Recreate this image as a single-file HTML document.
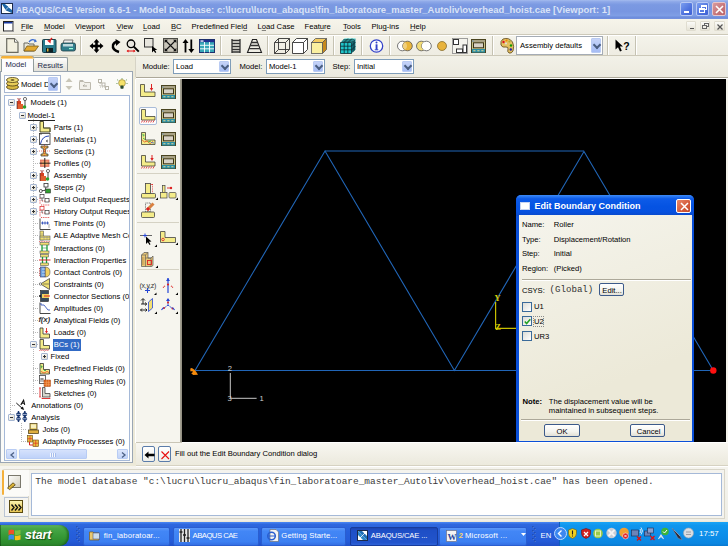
<!DOCTYPE html>
<html><head><meta charset="utf-8">
<style>
*{margin:0;padding:0;box-sizing:border-box}
html,body{width:728px;height:546px;overflow:hidden;background:#ECE9D8;font-family:"Liberation Sans",sans-serif;font-size:7.65px;color:#000}
.a{position:absolute}
.t{position:absolute;white-space:pre;line-height:10px;height:10px}
svg{position:absolute;overflow:visible}
u{text-decoration:underline;text-decoration-color:rgba(0,0,0,.45);text-underline-offset:0.5px}
.sep{position:absolute;width:2px;border-left:1px solid #C5C2B2;border-right:1px solid #fff}
.combo{position:absolute;background:#fff;border:1px solid #7F9DB9}
.dd{position:absolute;right:1px;top:1px;bottom:1px;width:10px;background:linear-gradient(#C6D3F7,#B4C8F6 50%,#A6BCF4);border:1px solid #B9CBF3;border-radius:1px}
.dd:after{content:"";position:absolute;left:50%;top:50%;width:4px;height:4px;margin-left:-2.3px;margin-top:-3.3px;border-right:2px solid #4A5E80;border-bottom:2px solid #4A5E80;transform:rotate(45deg)}
</style></head><body>
<!-- TITLE BAR -->
<div class="a" style="left:0;top:0;width:728px;height:19px;background:linear-gradient(#A4BBEE,#8DA8E8 9%,#7B99E2 25%,#7896E1 60%,#7F9EE5 82%,#7090DE 90%,#6A88DA 97%,#B8C8F0)"></div>
<svg style="left:1.3px;top:3px" width="12" height="11" viewBox="0 0 12 11"><rect x="0.5" y="0.5" width="11" height="10" fill="#fff" stroke="#1B2A4A"/><path d="M1 1 L6.5 3 L11 10 L5 7.5 Z" fill="#1B5E9E"/><path d="M1 1 L4 1 L7 4 L11 7 L11 10 L8 8 L4 5 Z" fill="#1E66A8"/><path d="M2.5 9 L9.5 2" stroke="#CFE0F0" stroke-width=".8"/></svg>
<div class="t" style="left:16.2px;top:4.5px;font-weight:bold;font-size:9.3px;color:#D9E3F7;line-height:11px;transform-origin:0 0;transform:scaleX(0.9050)">ABAQUS/CAE Version</div><div class="t" style="left:109.4px;top:4.5px;font-weight:bold;font-size:9.3px;color:#D9E3F7;line-height:11px;transform-origin:0 0;transform:scaleX(1.0171)">6.6-1 - Model Database:</div><div class="t" style="left:216.5px;top:4.5px;font-weight:bold;font-size:9.3px;color:#D9E3F7;line-height:11px;transform-origin:0 0;transform:scaleX(1.0165)">c:\lucru\lucru_abaqus\fin_laboratoare_master_Autoliv\overhead_hoist.cae [Viewport: 1]</div>
<div class="a" style="left:680px;top:2px;width:13px;height:14px;border-radius:2px;background:linear-gradient(135deg,#7A9DEF,#4E72DE 60%,#3E61D4);border:1px solid #B7C8F4"><div class="a" style="left:3px;top:8px;width:5px;height:2px;background:#fff"></div></div>
<div class="a" style="left:696px;top:2px;width:13px;height:14px;border-radius:2px;background:linear-gradient(135deg,#7A9DEF,#4E72DE 60%,#3E61D4);border:1px solid #B7C8F4"><div class="a" style="left:4px;top:2px;width:6px;height:5px;border:1px solid #fff;border-top-width:2px"></div><div class="a" style="left:2px;top:5px;width:6px;height:5px;border:1px solid #fff;border-top-width:2px;background:#5A7CE2"></div></div>
<div class="a" style="left:712px;top:2px;width:14px;height:14px;border-radius:2px;background:linear-gradient(135deg,#D89A9E,#C67479 60%,#B9646B);border:1px solid #E7C5C9"><svg style="left:2px;top:2px" width="9" height="9"><path d="M1 1 L8 8 M8 1 L1 8" stroke="#fff" stroke-width="1.6"/></svg></div>

<!-- MENU BAR -->
<div class="a" style="left:0;top:19px;width:728px;height:16px;background:linear-gradient(#F6F4EA,#EFEDE3);border-bottom:1px solid #CDC9B9"></div>
<svg style="left:3.3px;top:21px" width="11" height="11" viewBox="0 0 11 11"><rect x="0.5" y="0.5" width="9.5" height="9.5" fill="#fff" stroke="#222"/><rect x="1" y="1" width="8.5" height="1.5" fill="#1C3CA4"/><path d="M10.5 1.5 V10.5 H1.5" stroke="#999" fill="none"/></svg>
<div class="t" style="left:21px;top:22px"><u>F</u>ile</div>
<div class="t" style="left:44px;top:22px"><u>M</u>odel</div>
<div class="t" style="left:75px;top:22px">Vie<u>w</u>port</div>
<div class="t" style="left:116.5px;top:22px"><u>V</u>iew</div>
<div class="t" style="left:143px;top:22px"><u>L</u>oad</div>
<div class="t" style="left:171px;top:22px"><u>B</u>C</div>
<div class="t" style="left:191.5px;top:22px">Predefined Fiel<u>d</u></div>
<div class="t" style="left:257.5px;top:22px">L<u>o</u>ad Case</div>
<div class="t" style="left:304.5px;top:22px">Feat<u>u</u>re</div>
<div class="t" style="left:343px;top:22px"><u>T</u>ools</div>
<div class="t" style="left:371.5px;top:22px">Plu<u>g</u>-ins</div>
<div class="t" style="left:410px;top:22px"><u>H</u>elp</div>
<div class="a" style="left:686px;top:21px;width:10px;height:10px;border-radius:1px;background:linear-gradient(#FBFBF8,#E6E3D6);border:1px solid #E0DDD0"><div class="a" style="left:2.5px;top:6px;width:4px;height:1.2px;background:#555"></div></div>
<div class="a" style="left:700px;top:21px;width:10px;height:10px;border-radius:1px;background:linear-gradient(#FBFBF8,#E6E3D6);border:1px solid #E0DDD0"><div class="a" style="left:3px;top:1px;width:5px;height:4px;border:1px solid #666;border-top-width:1.5px"></div><div class="a" style="left:1px;top:3px;width:5px;height:4px;border:1px solid #666;border-top-width:1.5px;background:#F2F0E8"></div></div>
<div class="a" style="left:714px;top:21px;width:11px;height:10px;border-radius:1px;background:linear-gradient(#FBFBF8,#E6E3D6);border:1px solid #E0DDD0"><svg style="left:2px;top:1.5px" width="6" height="6"><path d="M0.5 0.5 L5.5 5.5 M5.5 0.5 L0.5 5.5" stroke="#555" stroke-width="1.2"/></svg></div>
<!-- TOOLBAR -->
<div class="a" style="left:0;top:35px;width:728px;height:21px;background:linear-gradient(#F4F3EA,#EEECE2);border-top:1px solid #FFFFFF;border-bottom:1px solid #CCC8B8"></div>
<div class="sep" style="left:80px;top:36px;height:19px"></div>
<div class="sep" style="left:220px;top:36px;height:19px"></div>
<div class="sep" style="left:267px;top:36px;height:19px"></div>
<div class="sep" style="left:333px;top:36px;height:19px"></div>
<div class="sep" style="left:361px;top:36px;height:19px"></div>
<div class="sep" style="left:389px;top:36px;height:19px"></div>
<div class="sep" style="left:492px;top:36px;height:19px"></div>
<div class="sep" style="left:607px;top:36px;height:19px"></div>
<div class="sep" style="left:635px;top:36px;height:19px"></div>
<!-- new -->
<svg style="left:6px;top:38px" width="13" height="15" viewBox="0 0 13 15"><path d="M0.7 0.7 H8.5 L12 4.2 V14.3 H0.7 Z" fill="#F3F0DF" stroke="#6B6A60" stroke-width="1.2"/><path d="M8.5 0.7 V4.2 H12" fill="#fff" stroke="#6B6A60"/></svg>
<!-- open -->
<svg style="left:23px;top:38px" width="16" height="15" viewBox="0 0 16 15"><path d="M1 5 H5 L6 6 H11 V13 H1 Z" fill="#E8E6DA" stroke="#6B6A60"/><path d="M1 13 L4 8 H15.5 L12 13 Z" fill="#E3A92F" stroke="#7A5A18" stroke-width=".8"/><path d="M6 4 Q9 0 12.5 3" stroke="#3F6FD0" stroke-width="1.3" fill="none"/><path d="M11 4.5 L14 3.5 L12 1" fill="#3F6FD0"/></svg>
<!-- save -->
<svg style="left:42px;top:38px" width="15" height="15" viewBox="0 0 15 15"><rect x="0.5" y="1.5" width="13.5" height="13" rx="1" fill="#2A7B8C" stroke="#1B3F4A"/><rect x="3" y="2" width="8.5" height="5" fill="#fff"/><rect x="4" y="10" width="7" height="4.5" fill="#0E1E22"/><rect x="5" y="10.5" width="1.5" height="3" fill="#D7B23C"/><path d="M10 0 L7 3.5" stroke="#D22" stroke-width="1.4"/><path d="M5 2.5 L8.5 5.5 L8.8 1.8 Z" fill="#D22"/></svg>
<!-- print -->
<svg style="left:60px;top:39px" width="16" height="14" viewBox="0 0 16 14"><path d="M4 1 H13 L12 5 H3 Z" fill="#EDEDED" stroke="#555" stroke-width=".8"/><path d="M1 6 Q1 4 3 4 H14 Q15.5 4 15.5 6 V10 Q15.5 12 13.5 12 H3 Q1 12 1 10 Z" fill="#2F7D8C" stroke="#1F3F48" stroke-width=".8"/><rect x="3" y="5" width="10" height="2.5" fill="#BFD8DD"/><rect x="9" y="9" width="4" height="1.2" fill="#9FD"/></svg>
<!-- move -->
<svg style="left:89px;top:39px" width="15" height="14" viewBox="0 0 15 14"><path d="M7.5 0 L10.5 3.5 H8.8 V5.7 H11 V4 L14.5 7 L11 10 V8.3 H8.8 V10.5 H10.5 L7.5 14 L4.5 10.5 H6.2 V8.3 H4 V10 L0.5 7 L4 4 V5.7 H6.2 V3.5 H4.5 Z" fill="#000"/></svg>
<!-- rotate -->
<svg style="left:110px;top:39px" width="11" height="14" viewBox="0 0 11 14"><path d="M9 13 Q2 11 3 6 Q4 3 7 3" stroke="#000" stroke-width="2.4" fill="none"/><path d="M5.5 0 L10.5 3 L6 7 Z" fill="#000"/></svg>
<!-- zoom -->
<svg style="left:126px;top:39px" width="14" height="14" viewBox="0 0 14 14"><circle cx="5" cy="4.8" r="3.8" fill="#E9E7E0" stroke="#000" stroke-width="1.3"/><path d="M7.8 7.6 L12.8 12.6" stroke="#000" stroke-width="2"/><path d="M1.5 12 H8.5" stroke="#E01010" stroke-width="1"/><path d="M0.5 12 L2.5 10.5 V13.5 Z M9.5 12 L7.5 10.5 V13.5 Z" fill="#E01010"/></svg>
<!-- box zoom -->
<svg style="left:144px;top:38px" width="15" height="15" viewBox="0 0 15 15"><rect x="0.5" y="0.5" width="8.5" height="8.5" fill="#E7E5DD" stroke="#333"/><path d="M8 8 L8 14.5 L9.7 12.7 L11.2 15 L12.3 14.3 L10.9 12 L13.3 12 Z" fill="#000"/></svg>
<!-- autofit -->
<svg style="left:162.5px;top:38px" width="15" height="15" viewBox="0 0 15 15"><rect x="0.5" y="0.5" width="14" height="14" fill="#9C998E" stroke="#4A4A44"/><rect x="1.5" y="1.5" width="12" height="12" fill="#C9C6BA"/><path d="M7.5 7.5 L2.5 2.5 M7.5 7.5 L12.5 2.5 M7.5 7.5 L2.5 12.5 M7.5 7.5 L12.5 12.5" stroke="#111" stroke-width="1.1"/><path d="M1.7 1.7 H5 L1.7 5 Z M13.3 1.7 H10 L13.3 5 Z M1.7 13.3 H5 L1.7 10 Z M13.3 13.3 H10 L13.3 10 Z" fill="#111"/></svg>
<!-- arrows updown -->
<svg style="left:182px;top:39px" width="13" height="14" viewBox="0 0 13 14"><path d="M3.5 13.5 V2.5" stroke="#000" stroke-width="1.8"/><path d="M0.5 4 L3.5 0 L6.5 4 Z" fill="#000"/><path d="M9.3 0.5 V11.5" stroke="#000" stroke-width="1.8"/><path d="M6.3 10 L9.3 14 L12.3 10 Z" fill="#000"/></svg>
<!-- table -->
<svg style="left:199px;top:39px" width="16" height="14" viewBox="0 0 16 14"><rect x="0.5" y="0.5" width="15" height="13" fill="#38A8B8" stroke="#1D2F6D"/><rect x="1" y="1" width="14" height="2.2" fill="#1F2F8F"/><rect x="1.5" y="1.4" width="3" height="1.3" fill="#fff"/><path d="M1 6.3 H15 M1 9.8 H15 M5.5 3 V13.5 M10.5 3 V13.5" stroke="#fff" stroke-width=".9"/></svg>
<!-- ladder -->
<svg style="left:230.5px;top:39px" width="10" height="14" viewBox="0 0 10 14"><path d="M1 0 V14 M9 0 V14" stroke="#222" stroke-width="1.2"/><path d="M1 1.5 H9 M1 4.5 H9 M1 7.5 H9 M1 10.5 H9 M1 13 H9" stroke="#333" stroke-width="1.3"/></svg>
<!-- pyramid -->
<svg style="left:246.5px;top:39px" width="15" height="14" viewBox="0 0 15 14"><path d="M5.5 0.5 H9.5 L14.5 13.5 H0.5 Z" fill="none" stroke="#222" stroke-width="1.1"/><path d="M4.5 3.5 H10.5 M3.3 6.5 H11.7 M2.1 9.7 H12.9" stroke="#333" stroke-width="1.3"/></svg>
<!-- wire cube -->
<svg style="left:274px;top:38px" width="16" height="16" viewBox="0 0 16 16"><path d="M0.5 4.5 H11.5 V15.5 H0.5 Z M4.5 0.5 H15.5 V11.5 H4.5 Z M0.5 4.5 L4.5 0.5 M11.5 4.5 L15.5 0.5 M11.5 15.5 L15.5 11.5 M0.5 15.5 L4.5 11.5" fill="none" stroke="#333" stroke-width=".9"/></svg>
<!-- hidden cube -->
<svg style="left:292px;top:38px" width="16" height="16" viewBox="0 0 16 16"><path d="M0.5 4.5 L4.5 0.5 H15.5 V11.5 L11.5 15.5 H0.5 Z" fill="#fff" stroke="#333" stroke-width=".9"/><path d="M0.5 4.5 H11.5 V15.5 M11.5 4.5 L15.5 0.5" fill="none" stroke="#333" stroke-width=".9"/></svg>
<!-- shaded cube -->
<svg style="left:311px;top:38px" width="16" height="16" viewBox="0 0 16 16"><path d="M0.5 4.5 L4.5 0.5 H15.5 L11.5 4.5 Z" fill="#F4CC61" stroke="#555" stroke-width=".8"/><path d="M11.5 4.5 L15.5 0.5 V11.5 L11.5 15.5 Z" fill="#C78A1C" stroke="#555" stroke-width=".8"/><rect x="0.5" y="4.5" width="11" height="11" fill="#FAF0A0" stroke="#555" stroke-width=".8"/></svg>
<!-- mesh cube -->
<svg style="left:340px;top:38px" width="16" height="16" viewBox="0 0 16 16"><path d="M0.5 4.5 L4.5 0.5 H15.5 L11.5 4.5 Z" fill="#3FD7D7"/><path d="M11.5 4.5 L15.5 0.5 V11.5 L11.5 15.5 Z" fill="#1A8F9A"/><rect x="0.5" y="4.5" width="11" height="11" fill="#20C4C8"/><path d="M0.5 4.5 H11.5 V15.5 H0.5 Z M4.2 4.5 V15.5 M7.8 4.5 V15.5 M0.5 8.2 H11.5 M0.5 11.8 H11.5 M1.8 3.2 H12.8 M3.2 1.8 H14.2 M13 3 V14 M14.2 1.8 V12.8 M8 0.5 L4 4.5 M12 0.5 L8 4.5 M11.5 8 L15.5 4 M11.5 12 L15.5 8" fill="none" stroke="#0A2A30" stroke-width=".8"/></svg>
<!-- info -->
<svg style="left:369px;top:39px" width="15" height="14" viewBox="0 0 15 14"><circle cx="7.5" cy="7" r="6.2" fill="#fff" stroke="#3342C8" stroke-width="1.3"/><rect x="6.6" y="5.3" width="1.9" height="5.5" fill="#3342C8"/><circle cx="7.5" cy="3.4" r="1" fill="#3342C8"/><path d="M5.7 10.8 H9.3" stroke="#3342C8"/></svg>
<!-- circles -->
<svg style="left:396.5px;top:40px" width="16" height="12" viewBox="0 0 16 12"><circle cx="5.3" cy="6" r="4.8" fill="#fff" stroke="#555" stroke-width=".8"/><circle cx="10.5" cy="6" r="4.8" fill="#E9B53B" stroke="#555" stroke-width=".8"/><path d="M7.9 2 A4.8 4.8 0 0 1 7.9 10 A4.8 4.8 0 0 1 7.9 2" fill="#F1CF7C"/></svg>
<svg style="left:415.5px;top:40px" width="16" height="12" viewBox="0 0 16 12"><circle cx="5.3" cy="6" r="4.8" fill="#F2DB77" stroke="#555" stroke-width=".8"/><circle cx="10.5" cy="6" r="4.8" fill="#fff" stroke="#555" stroke-width=".8" fill-opacity=".95"/><path d="M7.9 2 A4.8 4.8 0 0 1 7.9 10 A4.8 4.8 0 0 1 7.9 2" fill="#fff"/></svg>
<svg style="left:437px;top:41px" width="10" height="10" viewBox="0 0 10 10"><circle cx="5" cy="5" r="4.5" fill="#E8B33C" stroke="#7A6020" stroke-width=".7"/></svg>
<!-- layout -->
<svg style="left:452px;top:38px" width="16" height="16" viewBox="0 0 16 16"><rect x="0.5" y="0.5" width="15" height="15" fill="#F4F3EC" stroke="#888" stroke-width=".8"/><rect x="1.5" y="1.5" width="5" height="5" fill="#fff" stroke="#333"/><rect x="4.5" y="11" width="6" height="3.5" fill="#fff" stroke="#333"/><rect x="11" y="7" width="3.5" height="7.5" fill="#fff" stroke="#333"/></svg>
<!-- monitor -->
<svg style="left:471px;top:38.5px" width="15" height="14" viewBox="0 0 15 14"><rect x="0.5" y="0.5" width="14" height="13" fill="#C9C38A" stroke="#4A4420"/><rect x="1" y="1" width="13" height="2" fill="#A9A285"/><circle cx="2" cy="2" r=".6" fill="#3A8AD0"/><rect x="2.5" y="3.8" width="10" height="5" fill="#D8D2C6" stroke="#3A3418" stroke-width="1"/><rect x="1" y="10" width="13" height="3.5" fill="#2A8FA6"/><path d="M2.3 11.7 H4.5 M6.3 11.7 H8.5 M10.3 11.7 H12.5" stroke="#E8D890" stroke-width="1.1"/></svg>
<!-- palette -->
<svg style="left:500px;top:38px" width="14" height="16" viewBox="0 0 14 16"><path d="M3 1 Q9 -1 12.5 4 Q14.5 8 13 13 Q11.5 15.8 9 15 Q7 14 8 11 Q8.5 9 6 9 Q2 10 1 7 Q0 3 3 1 Z" fill="#E3C060" stroke="#5A4418" stroke-width=".8"/><circle cx="3.5" cy="4" r="1.2" fill="#D12"/><circle cx="6.5" cy="2.5" r="1.1" fill="#E80"/><circle cx="9.5" cy="3.5" r="1.1" fill="#AA3"/><circle cx="11" cy="7.5" r="1.2" fill="#190"/><circle cx="10.8" cy="11.5" r="1.2" fill="#22A"/><circle cx="6" cy="5.5" r="1" fill="#ddd"/></svg>
<div class="combo" style="left:516px;top:36px;width:87px;height:19px;border-color:#A5ACB5"><div class="t" style="left:3px;top:4px">Assembly defaults</div><div class="dd" style="width:10px"></div></div>
<!-- pointer help -->
<svg style="left:615px;top:39px" width="15" height="14" viewBox="0 0 15 14"><path d="M0.5 0.5 V10.5 L3 8.2 L5 12.5 L6.8 11.7 L4.9 7.6 L8 7.4 Z" fill="#000"/><text x="8.2" y="10.5" font-family="Liberation Sans" font-weight="bold" font-size="10.5">?</text></svg>
<!-- MODULE BAR -->
<div class="a" style="left:136px;top:56px;width:592px;height:21px;background:linear-gradient(#F2F1E8,#ECEADF)"></div>
<div class="a" style="left:136px;top:77px;width:592px;height:1px;background:#ACA899"></div>
<div class="a" style="left:136px;top:78px;width:592px;height:1px;background:#fff"></div>
<div class="a" style="left:135px;top:57px;width:1px;height:20px;background:#D6D3C6"></div>
<div class="t" style="left:142.5px;top:61.5px">Module:</div>
<div class="combo" style="left:173px;top:59px;width:58px;height:15px"><div class="t" style="left:2px;top:2px">Load</div><div class="dd"></div></div>
<div class="t" style="left:239.5px;top:61.5px">Model:</div>
<div class="combo" style="left:266px;top:59px;width:59px;height:15px"><div class="t" style="left:2px;top:2px">Model-1</div><div class="dd"></div></div>
<div class="t" style="left:332.5px;top:61.5px">Step:</div>
<div class="combo" style="left:354px;top:59px;width:60px;height:15px"><div class="t" style="left:2px;top:2px">Initial</div><div class="dd"></div></div>

<!-- LEFT PANEL -->
<div class="a" style="left:0;top:71px;width:133px;height:392px;background:#FBFBF8;border:1px solid #9AA6B4"></div>
<div class="a" style="left:33px;top:57px;width:35px;height:14px;background:linear-gradient(#FEFEFE,#ECEBE6 60%,#E3E1D9);border:1px solid #919B9C;border-bottom:none;border-radius:2px 2px 0 0"></div>
<div class="t" style="left:37.5px;top:60.5px;color:#1E2A4A">Results</div>
<div class="a" style="left:0.5px;top:56px;width:33px;height:16px;background:#FCFCFE;border:1px solid #919B9C;border-bottom:none;border-radius:2px 2px 0 0"></div>
<div class="a" style="left:1px;top:56px;width:32px;height:2px;background:#F4B03A;border-radius:2px 2px 0 0"></div>
<div class="a" style="left:0.5px;top:57.5px;width:33px;height:1px;background:#FDD68A"></div>
<div class="t" style="left:5.5px;top:60px;color:#1E2A4A">Model</div>
<!-- model db combo -->
<div class="combo" style="left:4px;top:75px;width:57px;height:18px;border-color:#A9B8D2;background:#fff"><div class="t" style="left:16px;top:4px">Model D</div><div class="dd" style="width:10px;right:2px"></div></div>
<svg style="left:6px;top:77px" width="13" height="13" viewBox="0 0 13 13"><ellipse cx="6.5" cy="10" rx="6" ry="2.5" fill="#D8B840" stroke="#4A3A10" stroke-width=".8"/><ellipse cx="6.5" cy="6.5" rx="6" ry="2.5" fill="#E8CC58" stroke="#4A3A10" stroke-width=".8"/><ellipse cx="6.5" cy="3" rx="6" ry="2.5" fill="#F0DC70" stroke="#4A3A10" stroke-width=".8"/><ellipse cx="6.5" cy="3" rx="2" ry=".8" fill="#4A3A10"/></svg>
<svg style="left:65px;top:77px" width="8" height="14" viewBox="0 0 8 14"><path d="M0.5 5 L4 1 L7.5 5 Z M0.5 9 L4 13 L7.5 9 Z" fill="#C9C6B8"/></svg>
<svg style="left:79px;top:79px" width="12" height="11" viewBox="0 0 12 11"><path d="M0.5 2.5 H4.5 L5.5 3.5 H11.5 V10.5 H0.5 Z" fill="#F2F1EA" stroke="#BDBAAE"/><path d="M0.5 1.5 H4 L5 2.5" fill="none" stroke="#BDBAAE"/><path d="M4 7 H8 M4 7 L5.5 5.5" stroke="#A9A69A"/></svg>
<svg style="left:98px;top:79px" width="11" height="11" viewBox="0 0 11 11"><rect x="0.5" y="0.5" width="3" height="3" fill="#fff" stroke="#B9B6AA"/><rect x="7.5" y="7.5" width="3" height="3" fill="#fff" stroke="#B9B6AA"/><rect x="4" y="4" width="3" height="3" fill="#fff" stroke="#B9B6AA"/><path d="M2 3.5 L4 5 M6.5 6.5 L8.5 8 M2 4 V8 H7" stroke="#B9B6AA" fill="none" stroke-dasharray="1 1"/></svg>
<svg style="left:116px;top:77.5px" width="12" height="12" viewBox="0 0 12 12"><path d="M6 0 V1.3 M1 1.5 L2.3 2.6 M11 1.5 L9.7 2.6 M0.3 5.5 H1.6 M11.7 5.5 H10.4" stroke="#6A9A5A" stroke-width=".8"/><circle cx="6" cy="5" r="3.4" fill="#F6E36A" stroke="#8A7A30" stroke-width=".6"/><rect x="4.4" y="7.6" width="3.2" height="3.2" rx=".8" fill="#2A4A30"/></svg>
<!-- tree box -->
<div class="a" style="left:4px;top:95px;width:126px;height:366px;background:#fff;border:1px solid #A5B9D8"></div>
<div class="a" style="left:0;top:0;width:128.5px;height:448px;overflow:hidden">
<!-- TREE -->
<div class="a" style="left:10px;top:106.9px;width:1px;height:307.3px;background:repeating-linear-gradient(#B8B8B8 0 1px,transparent 1px 2px)"></div>
<div class="a" style="left:21px;top:119.0px;width:1px;height:-4.0px;background:repeating-linear-gradient(#B8B8B8 0 1px,transparent 1px 2px)"></div>
<div class="a" style="left:33px;top:119.1px;width:1px;height:274.5px;background:repeating-linear-gradient(#B8B8B8 0 1px,transparent 1px 2px)"></div>
<div class="a" style="left:33px;top:127.0px;width:5.0px;height:1px;background:repeating-linear-gradient(90deg,#B8B8B8 0 1px,transparent 1px 2px)"></div>
<div class="a" style="left:33px;top:139.0px;width:5.0px;height:1px;background:repeating-linear-gradient(90deg,#B8B8B8 0 1px,transparent 1px 2px)"></div>
<div class="a" style="left:33px;top:151.0px;width:5.0px;height:1px;background:repeating-linear-gradient(90deg,#B8B8B8 0 1px,transparent 1px 2px)"></div>
<div class="a" style="left:33px;top:163.0px;width:5.0px;height:1px;background:repeating-linear-gradient(90deg,#B8B8B8 0 1px,transparent 1px 2px)"></div>
<div class="a" style="left:33px;top:175.0px;width:5.0px;height:1px;background:repeating-linear-gradient(90deg,#B8B8B8 0 1px,transparent 1px 2px)"></div>
<div class="a" style="left:33px;top:187.0px;width:5.0px;height:1px;background:repeating-linear-gradient(90deg,#B8B8B8 0 1px,transparent 1px 2px)"></div>
<div class="a" style="left:33px;top:199.0px;width:5.0px;height:1px;background:repeating-linear-gradient(90deg,#B8B8B8 0 1px,transparent 1px 2px)"></div>
<div class="a" style="left:33px;top:211.0px;width:5.0px;height:1px;background:repeating-linear-gradient(90deg,#B8B8B8 0 1px,transparent 1px 2px)"></div>
<div class="a" style="left:33px;top:223.0px;width:5.0px;height:1px;background:repeating-linear-gradient(90deg,#B8B8B8 0 1px,transparent 1px 2px)"></div>
<div class="a" style="left:33px;top:235.0px;width:5.0px;height:1px;background:repeating-linear-gradient(90deg,#B8B8B8 0 1px,transparent 1px 2px)"></div>
<div class="a" style="left:33px;top:247.0px;width:5.0px;height:1px;background:repeating-linear-gradient(90deg,#B8B8B8 0 1px,transparent 1px 2px)"></div>
<div class="a" style="left:33px;top:260.0px;width:5.0px;height:1px;background:repeating-linear-gradient(90deg,#B8B8B8 0 1px,transparent 1px 2px)"></div>
<div class="a" style="left:33px;top:272.0px;width:5.0px;height:1px;background:repeating-linear-gradient(90deg,#B8B8B8 0 1px,transparent 1px 2px)"></div>
<div class="a" style="left:33px;top:284.0px;width:5.0px;height:1px;background:repeating-linear-gradient(90deg,#B8B8B8 0 1px,transparent 1px 2px)"></div>
<div class="a" style="left:33px;top:296.0px;width:5.0px;height:1px;background:repeating-linear-gradient(90deg,#B8B8B8 0 1px,transparent 1px 2px)"></div>
<div class="a" style="left:33px;top:308.0px;width:5.0px;height:1px;background:repeating-linear-gradient(90deg,#B8B8B8 0 1px,transparent 1px 2px)"></div>
<div class="a" style="left:33px;top:320.0px;width:5.0px;height:1px;background:repeating-linear-gradient(90deg,#B8B8B8 0 1px,transparent 1px 2px)"></div>
<div class="a" style="left:33px;top:332.0px;width:5.0px;height:1px;background:repeating-linear-gradient(90deg,#B8B8B8 0 1px,transparent 1px 2px)"></div>
<div class="a" style="left:33px;top:344.0px;width:5.0px;height:1px;background:repeating-linear-gradient(90deg,#B8B8B8 0 1px,transparent 1px 2px)"></div>
<div class="a" style="left:33px;top:368.0px;width:5.0px;height:1px;background:repeating-linear-gradient(90deg,#B8B8B8 0 1px,transparent 1px 2px)"></div>
<div class="a" style="left:33px;top:380.0px;width:5.0px;height:1px;background:repeating-linear-gradient(90deg,#B8B8B8 0 1px,transparent 1px 2px)"></div>
<div class="a" style="left:33px;top:393.0px;width:5.0px;height:1px;background:repeating-linear-gradient(90deg,#B8B8B8 0 1px,transparent 1px 2px)"></div>
<div class="a" style="left:10px;top:405.0px;width:6.0px;height:1px;background:repeating-linear-gradient(90deg,#B8B8B8 0 1px,transparent 1px 2px)"></div>
<div class="a" style="left:44px;top:350.7px;width:1px;height:3.1px;background:repeating-linear-gradient(#B8B8B8 0 1px,transparent 1px 2px)"></div>
<div class="a" style="left:21px;top:423.2px;width:1px;height:18.7px;background:repeating-linear-gradient(#B8B8B8 0 1px,transparent 1px 2px)"></div>
<div class="a" style="left:21px;top:429.0px;width:6.0px;height:1px;background:repeating-linear-gradient(90deg,#B8B8B8 0 1px,transparent 1px 2px)"></div>
<div class="a" style="left:21px;top:441.0px;width:6.0px;height:1px;background:repeating-linear-gradient(90deg,#B8B8B8 0 1px,transparent 1px 2px)"></div>
<div class="a" style="left:7.5px;top:99.4px;width:7px;height:7px;border:1px solid #A6B7D2;background:linear-gradient(135deg,#fff,#DCD8CA);border-radius:1px"><div class="a" style="left:1px;top:2px;width:3px;height:1px;background:#333"></div></div>
<svg style="left:16px;top:96.9px" width="12" height="12" viewBox="0 0 12 12"><rect x="1" y="4" width="4" height="8" fill="#D84020"/><rect x="2" y="7" width="5" height="5" fill="#E06030"/><path d="M1 12 V4 M3 4 L3 1" stroke="#333" stroke-width=".6"/><circle cx="9" cy="2" r="1.6" fill="#fff" stroke="#333" stroke-width=".7"/><path d="M9 3.5 V10" stroke="#333" stroke-width=".9"/><circle cx="8.5" cy="10" r="1.8" fill="#2EA02E"/><path d="M1.5 1 L3 4 M4.5 1 L3 4" stroke="#C22" stroke-width=".6"/></svg>
<div class="t" style="left:30.6px;top:98.4px;">Models (1)</div>
<div class="a" style="left:18.8px;top:111.5px;width:7px;height:7px;border:1px solid #A6B7D2;background:linear-gradient(135deg,#fff,#DCD8CA);border-radius:1px"><div class="a" style="left:1px;top:2px;width:3px;height:1px;background:#333"></div></div>
<div class="t" style="left:27.5px;top:110.5px;">Model-1</div>
<div class="a" style="left:27.5px;top:119.8px;width:27.5px;height:1px;background:#222"></div>
<div class="a" style="left:30px;top:123.6px;width:7px;height:7px;border:1px solid #A6B7D2;background:linear-gradient(135deg,#fff,#DCD8CA);border-radius:1px"><div class="a" style="left:1px;top:2px;width:3px;height:1px;background:#333"></div><div class="a" style="left:2px;top:1px;width:1px;height:3px;background:#333"></div></div>
<svg style="left:38.75px;top:121.1px" width="12" height="12" viewBox="0 0 12 12"><path d="M1 0.5 H4.5 V7 H11 V11 H1 Z" fill="#F4EC8A" stroke="#3A3A20" stroke-width=".9"/><path d="M4.5 7 H11 V11" fill="none" stroke="#6A6A40" stroke-width="1.2"/></svg>
<div class="t" style="left:53.75px;top:122.6px;">Parts (1)</div>
<div class="a" style="left:30px;top:135.7px;width:7px;height:7px;border:1px solid #A6B7D2;background:linear-gradient(135deg,#fff,#DCD8CA);border-radius:1px"><div class="a" style="left:1px;top:2px;width:3px;height:1px;background:#333"></div><div class="a" style="left:2px;top:1px;width:1px;height:3px;background:#333"></div></div>
<svg style="left:38.75px;top:133.2px" width="12" height="12" viewBox="0 0 12 12"><rect x="0.5" y="0.5" width="10.5" height="11" fill="#fff" stroke="#333" stroke-width=".8"/><path d="M1.5 11 Q3 3 10 3" stroke="#2545B5" fill="none"/><path d="M7 8 L9 7 M7 8 L9 9" stroke="#333" stroke-width=".7"/><path d="M1 1 H3" stroke="#333" stroke-width=".7"/></svg>
<div class="t" style="left:53.75px;top:134.7px;">Materials (1)</div>
<div class="a" style="left:30px;top:147.8px;width:7px;height:7px;border:1px solid #A6B7D2;background:linear-gradient(135deg,#fff,#DCD8CA);border-radius:1px"><div class="a" style="left:1px;top:2px;width:3px;height:1px;background:#333"></div><div class="a" style="left:2px;top:1px;width:1px;height:3px;background:#333"></div></div>
<svg style="left:38.75px;top:145.3px" width="12" height="12" viewBox="0 0 12 12"><path d="M2 1 H9 V3 H7 Q6 6 7 9 H9 V11 H2 V9 H4 Q5 6 4 3 H2 Z" fill="#E8B048" stroke="#333" stroke-width=".7"/><path d="M5.5 0 V12 M0 6 H11" stroke="#D22" stroke-width=".6" stroke-dasharray="1 1"/></svg>
<div class="t" style="left:53.75px;top:146.8px;">Sections (1)</div>
<svg style="left:38.75px;top:157.4px" width="12" height="12" viewBox="0 0 12 12"><rect x="1.5" y="3" width="8.5" height="6.5" fill="#F08A70" stroke="#D86A50" stroke-width=".7"/><rect x="3" y="4.5" width="5.5" height="3.5" fill="#F6B070"/><path d="M5.8 1 V11 M0.5 6.2 H11.5" stroke="#111" stroke-width=".9"/></svg>
<div class="t" style="left:53.75px;top:158.9px;">Profiles (0)</div>
<div class="a" style="left:30px;top:171.9px;width:7px;height:7px;border:1px solid #A6B7D2;background:linear-gradient(135deg,#fff,#DCD8CA);border-radius:1px"><div class="a" style="left:1px;top:2px;width:3px;height:1px;background:#333"></div><div class="a" style="left:2px;top:1px;width:1px;height:3px;background:#333"></div></div>
<svg style="left:38.75px;top:169.4px" width="12" height="12" viewBox="0 0 12 12"><rect x="1" y="4" width="4" height="8" fill="#D84020"/><rect x="2" y="7" width="5" height="5" fill="#E06030"/><path d="M1 12 V4 M3 4 L3 1" stroke="#333" stroke-width=".6"/><circle cx="9" cy="2" r="1.6" fill="#fff" stroke="#333" stroke-width=".7"/><path d="M9 3.5 V10" stroke="#333" stroke-width=".9"/><circle cx="8.5" cy="10" r="1.8" fill="#2EA02E"/><path d="M1.5 1 L3 4 M4.5 1 L3 4" stroke="#C22" stroke-width=".6"/></svg>
<div class="t" style="left:53.75px;top:170.9px;">Assembly</div>
<div class="a" style="left:30px;top:184.0px;width:7px;height:7px;border:1px solid #A6B7D2;background:linear-gradient(135deg,#fff,#DCD8CA);border-radius:1px"><div class="a" style="left:1px;top:2px;width:3px;height:1px;background:#333"></div><div class="a" style="left:2px;top:1px;width:1px;height:3px;background:#333"></div></div>
<svg style="left:38.75px;top:181.5px" width="12" height="12" viewBox="0 0 12 12"><circle cx="1.8" cy="9" r="1.5" fill="#fff" stroke="#333" stroke-width=".8"/><path d="M3 8.5 H6 L7 5" stroke="#333" stroke-width=".8" fill="none"/><rect x="5" y="1.5" width="4" height="3.5" fill="#fff" stroke="#333" stroke-width=".8"/><rect x="6.5" y="7" width="5" height="4" fill="#2EA02E" stroke="#333" stroke-width=".6"/></svg>
<div class="t" style="left:53.75px;top:183.0px;">Steps (2)</div>
<div class="a" style="left:30px;top:196.1px;width:7px;height:7px;border:1px solid #A6B7D2;background:linear-gradient(135deg,#fff,#DCD8CA);border-radius:1px"><div class="a" style="left:1px;top:2px;width:3px;height:1px;background:#333"></div><div class="a" style="left:2px;top:1px;width:1px;height:3px;background:#333"></div></div>
<svg style="left:38.75px;top:193.6px" width="12" height="12" viewBox="0 0 12 12"><rect x="1" y="0.5" width="4" height="3.5" fill="#fff" stroke="#333" stroke-width=".7"/><path d="M1 4 V10 M3 7 H11 M2 11 H11" stroke="#D22" stroke-width=".8" stroke-dasharray="1 .8"/><rect x="6" y="4.5" width="4" height="3.5" fill="#fff" stroke="#333" stroke-width=".7"/><path d="M3 4 V7" stroke="#333" stroke-width=".7"/></svg>
<div class="t" style="left:53.75px;top:195.1px;">Field Output Requests</div>
<div class="a" style="left:30px;top:208.2px;width:7px;height:7px;border:1px solid #A6B7D2;background:linear-gradient(135deg,#fff,#DCD8CA);border-radius:1px"><div class="a" style="left:1px;top:2px;width:3px;height:1px;background:#333"></div><div class="a" style="left:2px;top:1px;width:1px;height:3px;background:#333"></div></div>
<svg style="left:38.75px;top:205.7px" width="12" height="12" viewBox="0 0 12 12"><rect x="1" y="0.5" width="4" height="3.5" fill="#fff" stroke="#D22" stroke-width=".7"/><path d="M1 4 V11 M3 7 H11 M2 11.5 H11" stroke="#D22" stroke-width=".8" stroke-dasharray="1 .8"/><rect x="6" y="4.5" width="4" height="3.5" fill="#fff" stroke="#333" stroke-width=".7"/><path d="M3 4 V7" stroke="#333" stroke-width=".7"/></svg>
<div class="t" style="left:53.75px;top:207.2px;">History Output Requests</div>
<svg style="left:38.75px;top:217.8px" width="12" height="12" viewBox="0 0 12 12"><path d="M1 0.5 V11.5 H11.5" stroke="#333" fill="none" stroke-width=".9"/><path d="M2 5 H10 M3.5 3.5 V6.5 M6 3.5 V6.5 M8.5 3.5 V6.5" stroke="#2545B5" stroke-width=".8"/><path d="M10 6 V10" stroke="#888" stroke-width=".7"/></svg>
<div class="t" style="left:53.75px;top:219.3px;">Time Points (0)</div>
<svg style="left:38.75px;top:229.9px" width="12" height="12" viewBox="0 0 12 12"><rect x="1" y="1" width="3.5" height="9" fill="#F0E070" stroke="#555" stroke-width=".6"/><rect x="1" y="6" width="10" height="4" fill="#F0E070" stroke="#555" stroke-width=".6"/><path d="M1 4 H4.5 M1 7.5 H11 M5 6 V10 M8 6 V10" stroke="#888" stroke-width=".5"/><path d="M0 11.5 H11" stroke="#D44" stroke-width=".7" stroke-dasharray="1 .7"/></svg>
<div class="t" style="left:53.75px;top:231.4px;">ALE Adaptive Mesh Constraints</div>
<svg style="left:38.75px;top:242.0px" width="12" height="12" viewBox="0 0 12 12"><rect x="1" y="0.5" width="9" height="2.5" fill="#F0E070" stroke="#555" stroke-width=".6"/><rect x="1" y="9" width="9" height="2.5" fill="#F0E070" stroke="#555" stroke-width=".6"/><path d="M3 3 V9 M8 3 V9" stroke="#1A9A3A" stroke-width="1.3"/><path d="M3 6 H8" stroke="#1A9A3A" stroke-width=".6"/></svg>
<div class="t" style="left:53.75px;top:243.5px;">Interactions (0)</div>
<svg style="left:38.75px;top:254.1px" width="12" height="12" viewBox="0 0 12 12"><rect x="1.5" y="0.5" width="8" height="2.5" fill="#F0E070" stroke="#555" stroke-width=".6"/><rect x="1.5" y="9" width="8" height="2.5" fill="#F0E070" stroke="#555" stroke-width=".6"/><path d="M3.5 3 V9 M7.5 3 V9" stroke="#1A9A3A" stroke-width="1.3"/><path d="M0 6 H11.5" stroke="#D22" stroke-width="1"/></svg>
<div class="t" style="left:53.75px;top:255.6px;">Interaction Properties</div>
<svg style="left:38.75px;top:266.2px" width="12" height="12" viewBox="0 0 12 12"><path d="M6 1 Q11 1 11 6 Q11 11 6 11 Z" fill="#F0D060" stroke="#555" stroke-width=".6"/><rect x="1.5" y="1" width="4.5" height="10" fill="#6AA0E0" stroke="#336" stroke-width=".6"/><path d="M0.5 2 V10" stroke="#A33" stroke-width=".8" stroke-dasharray="1 .7"/><path d="M3 3 H6 M3 6 H6 M3 9 H6" stroke="#fff" stroke-width=".6"/></svg>
<div class="t" style="left:53.75px;top:267.7px;">Contact Controls (0)</div>
<svg style="left:38.75px;top:278.2px" width="12" height="12" viewBox="0 0 12 12"><path d="M10.5 0.5 V11.5 L1.5 6 Z" fill="#F0E070" stroke="#444" stroke-width=".8"/><circle cx="1.5" cy="6" r="1.2" fill="#fff" stroke="#333" stroke-width=".6"/><path d="M4 6 H10" stroke="#444" stroke-width=".6"/></svg>
<div class="t" style="left:53.75px;top:279.8px;">Constraints (0)</div>
<svg style="left:38.75px;top:290.3px" width="12" height="12" viewBox="0 0 12 12"><rect x="1.5" y="0.5" width="8" height="11" fill="#3A4A5A" stroke="#222" stroke-width=".6"/><rect x="3" y="4" width="7" height="4" fill="#F0D060"/><path d="M5 6 H11" stroke="#D22" stroke-width="1"/><path d="M0 6 H2" stroke="#111" stroke-width="1.5"/></svg>
<div class="t" style="left:53.75px;top:291.8px;">Connector Sections (0)</div>
<svg style="left:38.75px;top:302.4px" width="12" height="12" viewBox="0 0 12 12"><path d="M1 0.5 V11.5 H11.5" stroke="#333" fill="none" stroke-width=".9"/><path d="M2 1 V3 H5 L9 8 H11" stroke="#2545B5" fill="none" stroke-width=".8"/></svg>
<div class="t" style="left:53.75px;top:303.9px;">Amplitudes (0)</div>
<div class="t" style="left:38.5px;top:315.2px;font-style:italic;font-weight:bold;font-size:8px;color:#333;letter-spacing:-.3px">f(x)</div>
<div class="t" style="left:53.75px;top:316.0px;">Analytical Fields (0)</div>
<svg style="left:38.75px;top:326.6px" width="12" height="12" viewBox="0 0 12 12"><path d="M1 1 H4 V7 H10.5 V11 H1 Z" fill="#F4EC8A" stroke="#333" stroke-width=".8"/><path d="M7.5 1 V5.5" stroke="#D22" stroke-width=".9"/><path d="M6 4 L7.5 6.5 L9 4 Z" fill="#D22"/></svg>
<div class="t" style="left:53.75px;top:328.1px;">Loads (0)</div>
<div class="a" style="left:30px;top:341.2px;width:7px;height:7px;border:1px solid #A6B7D2;background:linear-gradient(135deg,#fff,#DCD8CA);border-radius:1px"><div class="a" style="left:1px;top:2px;width:3px;height:1px;background:#333"></div></div>
<svg style="left:38.75px;top:338.7px" width="12" height="12" viewBox="0 0 12 12"><path d="M1 0.5 H4.5 V6.5 H10.5 V10 H1 Z" fill="#F4EC8A" stroke="#333" stroke-width=".8"/><path d="M0.5 12 L1.5 10.5 M2.5 12 L3.5 10.5 M4.5 12 L5.5 10.5 M6.5 12 L7.5 10.5 M8.5 12 L9.5 10.5" stroke="#D22" stroke-width=".7"/></svg>
<div class="a" style="left:52.5px;top:338.7px;width:28px;height:12px;background:#316AC5"></div>
<div class="t" style="left:53.75px;top:340.2px;color:#fff;">BCs (1)</div>
<div class="a" style="left:41.3px;top:353.3px;width:7px;height:7px;border:1px solid #A6B7D2;background:linear-gradient(135deg,#fff,#DCD8CA);border-radius:1px"><div class="a" style="left:1px;top:2px;width:3px;height:1px;background:#333"></div><div class="a" style="left:2px;top:1px;width:1px;height:3px;background:#333"></div></div>
<div class="t" style="left:50.6px;top:352.3px;">Fixed</div>
<svg style="left:38.75px;top:362.9px" width="12" height="12" viewBox="0 0 12 12"><path d="M1 0.5 H4.5 V6.5 H10.5 V11 H1 Z" fill="#F4EC8A" stroke="#333" stroke-width=".8"/><path d="M1.6 2 L3.8 3.5 L2 5.5 Z" fill="#50B050"/><path d="M2 8.5 L5 10 L8 8.5 L10 9.5" stroke="#E86A30" stroke-width="1" fill="none"/><path d="M5 7.5 L7 7.5" stroke="#50B050" stroke-width="1"/></svg>
<div class="t" style="left:53.75px;top:364.4px;">Predefined Fields (0)</div>
<svg style="left:38.75px;top:375.0px" width="12" height="12" viewBox="0 0 12 12"><rect x="0.5" y="0.5" width="6" height="8" fill="#fff" stroke="#444" stroke-width=".8"/><path d="M2 3 V7 M4 3 V7 M2 4 H4" stroke="#444" stroke-width=".7"/><rect x="5" y="5" width="6.5" height="6.5" fill="#E06A20" stroke="#A04010" stroke-width=".5"/><path d="M5 7.5 H11.5 M5 9.5 H11.5 M7.5 5 V11.5 M9.5 5 V11.5" stroke="#F0A060" stroke-width=".5"/></svg>
<div class="t" style="left:53.75px;top:376.5px;">Remeshing Rules (0)</div>
<svg style="left:38.75px;top:387.1px" width="12" height="12" viewBox="0 0 12 12"><path d="M3.5 0.5 H6 V6.5 H11 V10 H3.5 Z" fill="#D8D8D0" stroke="#444" stroke-width=".8"/><path d="M1 0.5 V10 M3 11.5 H11" stroke="#D22" stroke-width=".9"/><path d="M0 1 H2 M0 10 H2 M3 10.5 V12 M11 10.5 V12" stroke="#D22" stroke-width=".6"/></svg>
<div class="t" style="left:53.75px;top:388.6px;">Sketches (0)</div>
<svg style="left:16px;top:399.1px" width="12" height="12" viewBox="0 0 12 12"><path d="M0.3 4 L6.5 9.6" stroke="#111" stroke-width="1"/><path d="M8.2 11 L4.6 9.8 L6.8 7.5 Z" fill="#111"/><path d="M4.8 5.9 L7.6 1.2 L8.7 5.9 M6 4.3 H8.5" stroke="#111" stroke-width="1.1" fill="none"/></svg>
<div class="t" style="left:31.25px;top:400.6px;">Annotations (0)</div>
<div class="a" style="left:7.5px;top:413.7px;width:7px;height:7px;border:1px solid #A6B7D2;background:linear-gradient(135deg,#fff,#DCD8CA);border-radius:1px"><div class="a" style="left:1px;top:2px;width:3px;height:1px;background:#333"></div></div>
<svg style="left:15.6px;top:411.2px" width="12" height="12" viewBox="0 0 12 12"><path d="M1.8 0 H3.2 V1.3 L4.8 2.6 V4.2 L3.5 5.2 V6 L4.8 7 V8.6 L3.2 9.8 V11 H1.8 V9.8 L0.2 8.6 V7 L1.5 6 V5.2 L0.2 4.2 V2.6 L1.8 1.3 Z" fill="#15336E"/><path d="M0.5 3.4 H4.5 M0.5 7.8 H4.5" stroke="#E8F0FF" stroke-width=".7"/><path d="M8.1 0 H9.5 V1.3 L11.1 2.6 V4.2 L9.8 5.2 V6 L11.1 7 V8.6 L9.5 9.8 V11 H8.1 V9.8 L6.5 8.6 V7 L7.8 6 V5.2 L6.5 4.2 V2.6 L8.1 1.3 Z" fill="#15336E"/><path d="M6.8 3.4 H10.8 M6.8 7.8 H10.8" stroke="#E8F0FF" stroke-width=".7"/></svg>
<div class="t" style="left:31.25px;top:412.7px;">Analysis</div>
<svg style="left:28px;top:423.3px" width="12" height="12" viewBox="0 0 12 12"><rect x="2" y="0.5" width="7" height="6" fill="#E8D070" stroke="#5A4A20" stroke-width=".8"/><rect x="3" y="1.5" width="5" height="3.5" fill="#F8F0C0"/><rect x="0.5" y="7" width="10" height="3.5" fill="#E0B040" stroke="#5A4A20" stroke-width=".8"/></svg>
<div class="t" style="left:42.5px;top:424.8px;">Jobs (0)</div>
<svg style="left:27px;top:435.4px" width="12" height="12" viewBox="0 0 12 12"><rect x="0.5" y="0.5" width="5" height="6.5" fill="#E8C040" stroke="#6A4A10" stroke-width=".6"/><path d="M0.5 3.7 H5.5 M3 0.5 V7" stroke="#D22" stroke-width=".6"/><rect x="6" y="5" width="5.5" height="6.5" fill="#E8C040" stroke="#6A4A10" stroke-width=".6"/><path d="M6 8.2 H11.5 M8.7 5 V11.5" stroke="#D22" stroke-width=".6"/><path d="M2.5 7 V10 H6" stroke="#D22" stroke-width="1" fill="none"/></svg>
<div class="t" style="left:42.5px;top:436.9px;">Adaptivity Processes (0)</div>
</div>
<!-- tree scrollbar -->
<div class="a" style="left:5px;top:448.5px;width:123px;height:11px;background:#FAFAF6"></div>
<div class="a" style="left:6px;top:449px;width:10.5px;height:10px;border:1px solid #B8CCF4;border-radius:1px;background:linear-gradient(#DCE6FC,#C2D4F8)"><svg style="left:2.5px;top:1.5px" width="5" height="6"><path d="M4 0.5 L1 3 L4 5.5" stroke="#4D6185" stroke-width="1.3" fill="none"/></svg></div>
<div class="a" style="left:18.5px;top:449px;width:68px;height:10px;border:1px solid #B8CCF4;border-radius:1px;background:linear-gradient(#D6E2FC,#BFD2F9)"><div class="a" style="left:30px;top:2.5px;width:6px;height:4px;background:repeating-linear-gradient(90deg,#F4F8FE 0 1px,#A7BDED 1px 2px)"></div></div>
<div class="a" style="left:117px;top:449px;width:10.5px;height:10px;border:1px solid #B8CCF4;border-radius:1px;background:linear-gradient(#DCE6FC,#C2D4F8)"><svg style="left:3px;top:1.5px" width="5" height="6"><path d="M1 0.5 L4 3 L1 5.5" stroke="#4D6185" stroke-width="1.3" fill="none"/></svg></div>

<!-- TOOLBOX -->
<div class="a" style="left:136px;top:79px;width:45px;height:363px;background:#F6F5EE"></div>
<div class="a" style="left:135px;top:79px;width:1px;height:364px;background:#FFFFFF"></div>
<div class="a" style="left:180px;top:79px;width:2px;height:363px;background:linear-gradient(90deg,#A9A697,#8E8B7E)"></div>
<div class="a" style="left:136px;top:442px;width:46px;height:1px;background:#C9C5B6"></div>
<div class="a" style="left:137px;top:173px;width:42px;height:1px;background:#D5D2C4"></div>
<div class="a" style="left:137px;top:222px;width:42px;height:1px;background:#D5D2C4"></div>
<div class="a" style="left:137px;top:269px;width:42px;height:1px;background:#D5D2C4"></div>
<!-- row 1 -->
<svg style="left:140px;top:84px" width="16" height="13" viewBox="0 0 16 13"><path d="M0.5 0.5 H4.5 V8 H15 V12.5 H0.5 Z" fill="#F4EC8A" stroke="#3A3A30" stroke-width=".75"/><path d="M11.5 0 V5.5" stroke="#D22" stroke-width="1"/><path d="M9.8 4 L11.5 7 L13.2 4 Z" fill="#D22"/></svg>
<svg style="left:160.5px;top:85px" width="15" height="14" viewBox="0 0 15 14"><rect x="0.5" y="0.5" width="14" height="13" fill="#C9C38A" stroke="#4A4420"/><rect x="1" y="1" width="13" height="2" fill="#A9A285"/><circle cx="2" cy="2" r=".6" fill="#3A8AD0"/><rect x="2.5" y="3.8" width="10" height="5" fill="#D8D2C6" stroke="#3A3418" stroke-width="1"/><rect x="1" y="10" width="13" height="3.5" fill="#2A8FA6"/><path d="M2.3 11.7 H4.5 M6.3 11.7 H8.5 M10.3 11.7 H12.5" stroke="#E8D890" stroke-width="1.1"/></svg>
<!-- row 2 (selected) -->
<div class="a" style="left:138.5px;top:106.5px;width:18.5px;height:18.5px;border:1px solid #A9BCD9;border-radius:2px;background:#FDFDFE"></div>
<svg style="left:141px;top:109px" width="15" height="14" viewBox="0 0 15 14"><path d="M0.5 0.5 H4.5 V7.5 H14 V11 H0.5 Z" fill="#F4EC8A" stroke="#3A3A30" stroke-width=".75"/><path d="M0.5 13.5 L1.5 11.5 M2.8 13.5 L3.8 11.5 M5.1 13.5 L6.1 11.5 M7.4 13.5 L8.4 11.5 M9.7 13.5 L10.7 11.5 M12 13.5 L13 11.5" stroke="#E02020" stroke-width=".8"/></svg>
<svg style="left:160.5px;top:108.5px" width="15" height="14" viewBox="0 0 15 14"><rect x="0.5" y="0.5" width="14" height="13" fill="#C9C38A" stroke="#4A4420"/><rect x="1" y="1" width="13" height="2" fill="#A9A285"/><circle cx="2" cy="2" r=".6" fill="#3A8AD0"/><rect x="2.5" y="3.8" width="10" height="5" fill="#D8D2C6" stroke="#3A3418" stroke-width="1"/><rect x="1" y="10" width="13" height="3.5" fill="#2A8FA6"/><path d="M2.3 11.7 H4.5 M6.3 11.7 H8.5 M10.3 11.7 H12.5" stroke="#E8D890" stroke-width="1.1"/></svg>
<!-- row 3 -->
<svg style="left:141px;top:131.5px" width="15" height="13" viewBox="0 0 15 13"><path d="M0.5 0.5 H4.5 V8 H14 V12.5 H0.5 Z" fill="#F4EC8A" stroke="#3A3A30" stroke-width=".75"/><path d="M1.2 1.5 L3.8 3 L2 5 Z" fill="#5DBE5D"/><path d="M1.2 8 L3.5 10 L6 9 L9 11.5 L12 9.5" stroke="#E86A30" stroke-width="1" fill="none"/><path d="M2 6 L4 7.5 M7 10 L10 9" stroke="#50B850" stroke-width="1"/><path d="M10 10.5 L13 11" stroke="#3A6AD0" stroke-width=".8"/></svg>
<svg style="left:160.5px;top:132px" width="15" height="14" viewBox="0 0 15 14"><rect x="0.5" y="0.5" width="14" height="13" fill="#C9C38A" stroke="#4A4420"/><rect x="1" y="1" width="13" height="2" fill="#A9A285"/><circle cx="2" cy="2" r=".6" fill="#3A8AD0"/><rect x="2.5" y="3.8" width="10" height="5" fill="#D8D2C6" stroke="#3A3418" stroke-width="1"/><rect x="1" y="10" width="13" height="3.5" fill="#2A8FA6"/><path d="M2.3 11.7 H4.5 M6.3 11.7 H8.5 M10.3 11.7 H12.5" stroke="#E8D890" stroke-width="1.1"/></svg>
<!-- row 4 -->
<svg style="left:140.5px;top:155px" width="15" height="14" viewBox="0 0 15 14"><path d="M0.5 0.5 H4.5 V7 H14 V11 H0.5 Z" fill="#F4EC8A" stroke="#3A3A30" stroke-width=".75"/><path d="M11 0 V4.5" stroke="#D22" stroke-width="1"/><path d="M9.3 3 L11 6 L12.7 3 Z" fill="#D22"/><path d="M0.5 13.5 L1.5 11.5 M2.8 13.5 L3.8 11.5 M5.1 13.5 L6.1 11.5 M7.4 13.5 L8.4 11.5 M9.7 13.5 L10.7 11.5 M12 13.5 L13 11.5" stroke="#E02020" stroke-width=".8"/></svg>
<svg style="left:160.5px;top:155px" width="15" height="14" viewBox="0 0 15 14"><rect x="0.5" y="0.5" width="14" height="13" fill="#C9C38A" stroke="#4A4420"/><rect x="1" y="1" width="13" height="2" fill="#A9A285"/><circle cx="2" cy="2" r=".6" fill="#3A8AD0"/><rect x="2.5" y="3.8" width="10" height="5" fill="#D8D2C6" stroke="#3A3418" stroke-width="1"/><rect x="1" y="10" width="13" height="3.5" fill="#2A8FA6"/><path d="M2.3 11.7 H4.5 M6.3 11.7 H8.5 M10.3 11.7 H12.5" stroke="#E8D890" stroke-width="1.1"/></svg>
<!-- row 5 -->
<svg style="left:141px;top:182.5px" width="17" height="17" viewBox="0 0 17 17"><rect x="4.5" y="0.5" width="5" height="10" fill="#F4EC8A" stroke="#444" stroke-width=".8"/><rect x="0.5" y="10.5" width="14" height="4.5" rx="1" fill="#F4EC8A" stroke="#444" stroke-width=".8"/><path d="M11.5 1 V10" stroke="#D22" stroke-width=".7" stroke-dasharray="1 .8"/><path d="M9.5 1.5 H12" stroke="#D22" stroke-width=".7"/><path d="M17.0 14.5 V17.0 H14.5 Z" fill="#000"/></svg>
<svg style="left:159.5px;top:184.5px" width="18" height="15" viewBox="0 0 18 15"><rect x="2.5" y="0.5" width="2.5" height="7" fill="#F4EC8A" stroke="#444" stroke-width=".7"/><rect x="0.5" y="7.5" width="6.5" height="5.5" fill="#F4EC8A" stroke="#444" stroke-width=".7"/><rect x="9" y="7.5" width="7" height="5.5" rx="1" fill="#F4EC8A" stroke="#444" stroke-width=".7"/><path d="M7 3 H11" stroke="#D22" stroke-width=".9"/><circle cx="11" cy="3" r="1.2" fill="#D22"/><path d="M18.0 12.5 V15.0 H15.5 Z" fill="#000"/></svg>
<!-- row 6 -->
<svg style="left:141px;top:202px" width="15" height="16" viewBox="0 0 15 16"><rect x="4.5" y="1" width="5" height="8.5" fill="none" stroke="#333" stroke-width=".7" stroke-dasharray="1 .8"/><rect x="0.5" y="10" width="13" height="5.5" rx="1" fill="#F4EC8A" stroke="#444" stroke-width=".8"/><path d="M6 8 L12.5 1.5" stroke="#D88040" stroke-width="3"/><path d="M6 8 L8 6" stroke="#D22" stroke-width="3"/></svg>
<!-- row 7 -->
<svg style="left:140px;top:233px" width="17" height="14" viewBox="0 0 17 14"><path d="M0 2.5 H12" stroke="#555" stroke-width=".9"/><path d="M5 0.5 V4.5 M3 2.5 H7" stroke="#2545D5" stroke-width="1"/><path d="M6 3.5 V11 L7.8 9.3 L9.5 12 L10.5 11.3 L9 8.7 L11.5 8.5 Z" fill="#000"/><path d="M17.0 11.5 V14.0 H14.5 Z" fill="#000"/></svg>
<svg style="left:159.5px;top:230.5px" width="18" height="14" viewBox="0 0 18 14"><path d="M0.5 0.5 H5 V6.5 H15.5 V11.5 H0.5 Z" fill="#F4EC8A" stroke="#444" stroke-width=".8"/><circle cx="3" cy="8.5" r="1.3" fill="none" stroke="#D22" stroke-width=".8"/><path d="M18.0 11.5 V14.0 H15.5 Z" fill="#000"/></svg>
<!-- row 8 -->
<svg style="left:140.5px;top:251.5px" width="17" height="16" viewBox="0 0 17 16"><path d="M0.5 3 L3 0.5 H7 V6 H10 L12 4 V13.5 L10.5 14.5 H0.5 Z" fill="#E8C878" stroke="#555" stroke-width=".7"/><path d="M0.5 3 H4.5 V14.5 M4.5 3 L7 0.5 M4.5 6 H10 V14.5" fill="none" stroke="#555" stroke-width=".6"/><path d="M1.5 5 V13 M2.8 5 V13" stroke="#A07030" stroke-width=".4"/><rect x="6.5" y="8.5" width="4" height="4" fill="none" stroke="#D22" stroke-width=".9"/><path d="M17.0 13.5 V16.0 H14.5 Z" fill="#000"/></svg>
<!-- row 9 -->
<div class="t" style="left:139.5px;top:281px;font-size:7px;color:#333;letter-spacing:-.3px">(x,y,z)</div>
<svg style="left:139px;top:278px" width="18" height="17" viewBox="0 0 18 17"><path d="M8.5 10 V15 M6 12.5 H11" stroke="#2545D5" stroke-width="1"/><path d="M17.5 14.5 V17.0 H15.0 Z" fill="#000"/></svg>
<svg style="left:160.5px;top:277.5px" width="17" height="17" viewBox="0 0 17 17"><path d="M7 0 V15" stroke="#2545D5" stroke-width="1.2"/><path d="M5 3 L7 0 L9 3 Z" fill="#2545D5"/><circle cx="7" cy="6.5" r="1.1" fill="#D22"/><path d="M2 9.5 L4 8 M12 9.5 L10 8" stroke="#D22" stroke-width="1.1" stroke-dasharray="1 .6"/><path d="M17.0 14.5 V17.0 H14.5 Z" fill="#000"/></svg>
<!-- row 10 -->
<svg style="left:140px;top:298px" width="17" height="16" viewBox="0 0 17 16"><path d="M8.5 4 L12.5 0.5 V10 L8.5 13.5 Z" fill="#F4E070" stroke="#2545D5" stroke-width=".8"/><path d="M3 1 V6 M1 2.5 L3 0.5 L5 2.5 M1 6 H6.5 M5 4.5 L6.8 6 L5 7.5 M0.5 12 H7 M2 10.5 L0.5 12 L2 13.5 M5.5 10.5 L7 12 L5.5 13.5" stroke="#111" stroke-width=".9" fill="none"/><path d="M17.0 13.5 V16.0 H14.5 Z" fill="#000"/></svg>
<svg style="left:160.5px;top:298px" width="17" height="16" viewBox="0 0 17 16"><path d="M7 1 V7 M7 7 L2 11 M7 7 L12 11" stroke="#2545D5" stroke-width="1" stroke-dasharray="1.5 .6"/><path d="M5 3 L7 0 L9 3 Z" fill="#2545D5"/><circle cx="7" cy="4.5" r="1" fill="#D22"/><circle cx="3" cy="10" r="1" fill="#D22"/><circle cx="11.5" cy="10.5" r="1" fill="#D22"/><path d="M0.5 12 L2.5 9.5 M13.5 12 L11.5 9.5" stroke="#2545D5" stroke-width="1.2"/><path d="M17.0 13.5 V16.0 H14.5 Z" fill="#000"/></svg>
<!-- VIEWPORT -->
<div class="a" style="left:182px;top:79px;width:544px;height:363px;background:#000"></div>
<div class="a" style="left:726px;top:79px;width:2px;height:364px;background:#F4F3EC"></div>
<svg style="left:0;top:0" width="728" height="546" viewBox="0 0 728 546">
<g stroke="#2166B8" stroke-width="1.1" fill="none">
<path d="M195 370.5 L325 151 L454.4 370.5 L584 151.5 L713.3 370.5"/>
<path d="M325 151 H584"/>
<path d="M195 370.5 H713.3"/>
</g>
<g stroke="#C8C8C8" stroke-width="1" fill="none"><path d="M230.3 373 V398.3 H256.6"/></g>
<g font-family="Liberation Sans" font-size="7.6" fill="#D0D0D0"><text x="227.8" y="370.5">2</text><text x="227.6" y="400.8">3</text><text x="259.5" y="400.8">1</text></g>
<g stroke="#C8C000" stroke-width="1.2" fill="none"><path d="M495.6 302 V328.3 H517"/></g>
<g font-family="Liberation Serif" font-size="8.4" font-weight="bold" fill="#D8CC00"><text x="494.6" y="301">Y</text><text x="495.2" y="330.2">Z</text></g>
<path d="M190.3 368.6 L191.8 367.9 L194.5 369.8 L196.2 371.8 L198 374.8 L193.2 375.1 L191.2 373.2 L192.6 372.6 L191.4 371 L190.4 371.4 Z" fill="#F58A0C"/><circle cx="192.4" cy="371.6" r=".6" fill="#5A3000"/>
<circle cx="713.3" cy="370.5" r="3.2" fill="#FF1010"/>
</svg>

<!-- DIALOG -->
<div class="a" style="left:516px;top:195px;width:178px;height:248px;background:#0A4FD8;border-radius:5px 5px 0 0"></div>
<div class="a" style="left:516px;top:195px;width:178px;height:21px;border-radius:5px 5px 0 0;background:linear-gradient(#3D8BF7,#0D5BE8 18%,#0553E2 55%,#0651E0 80%,#0A48C8)"></div>
<div class="a" style="left:519px;top:215px;width:173px;height:226px;background:linear-gradient(160deg,#F5F4EC,#ECE9D8 70%)"></div>
<div class="a" style="left:520px;top:202px;width:10px;height:7.5px;background:#fff;border:1px solid #C8D4F0"></div>
<div class="t" style="left:534.4px;top:200.5px;font-weight:bold;font-size:9px;color:#fff;line-height:11px">Edit Boundary Condition</div>
<div class="a" style="left:676.3px;top:198.5px;width:14.7px;height:14.2px;border-radius:2px;border:1px solid #fff;background:linear-gradient(135deg,#E8886A,#D45A3A 60%,#C04A2C)"><svg style="left:2.3px;top:2.3px" width="9" height="9"><path d="M1 1 L8 8 M8 1 L1 8" stroke="#fff" stroke-width="1.5"/></svg></div>
<div class="t" style="left:521.9px;top:219.5px">Name:</div><div class="t" style="left:553.75px;top:219.5px">Roller</div>
<div class="t" style="left:521.9px;top:234.8px">Type:</div><div class="t" style="left:553.75px;top:234.8px">Displacement/Rotation</div>
<div class="t" style="left:521.9px;top:249.2px">Step:</div><div class="t" style="left:553.75px;top:249.2px">Initial</div>
<div class="t" style="left:521.9px;top:264.3px">Region:</div><div class="t" style="left:553.75px;top:264.3px">(Picked)</div>
<div class="a" style="left:521.5px;top:278.5px;width:169px;height:1px;background:#ACA899"></div>
<div class="a" style="left:521.5px;top:279.5px;width:169px;height:1px;background:#fff"></div>
<div class="t" style="left:521.9px;top:285.5px">CSYS:</div>
<div class="t" style="left:549.6px;top:285.3px;font-family:'Liberation Mono',monospace;font-size:9.1px;color:#333">(Global)</div>
<div class="a" style="left:599.3px;top:283.2px;width:25.1px;height:13.1px;border:1px solid #3C5A8A;border-radius:2px;background:linear-gradient(#FFFFFF,#F3F3EE 60%,#E2E0D6)"><div class="t" style="left:2px;top:1.4px">Edit...</div></div>
<div class="a" style="left:522px;top:302px;width:10px;height:10px;border:1px solid #3A6A9A;background:linear-gradient(135deg,#DCDCD6,#FFFFFF)"></div>
<div class="t" style="left:534px;top:302.2px">U1</div>
<div class="a" style="left:522px;top:316px;width:10px;height:10px;border:1px solid #3A6A9A;background:linear-gradient(135deg,#DCDCD6,#FFFFFF)"><svg style="left:0.5px;top:0.5px" width="7" height="7.3" viewBox="0 0 7 7.3"><path d="M0.8 3.6 L2.6 5.6 L6.3 1.2" stroke="#21A121" stroke-width="1.5" fill="none"/></svg></div>
<div class="a" style="left:533px;top:315.5px;width:11px;height:11px;border:1px dotted #8A8A8A"></div>
<div class="t" style="left:534px;top:317px">U2</div>
<div class="a" style="left:522px;top:331px;width:10px;height:10px;border:1px solid #3A6A9A;background:linear-gradient(135deg,#DCDCD6,#FFFFFF)"></div>
<div class="t" style="left:534px;top:331.6px">UR3</div>
<div class="t" style="left:522.6px;top:397px;font-weight:bold">Note:</div>
<div class="t" style="left:548.8px;top:397px">The displacement value will be</div>
<div class="t" style="left:548.8px;top:406.2px">maintained in subsequent steps.</div>
<div class="a" style="left:521px;top:419px;width:169px;height:1px;background:#ACA899"></div>
<div class="a" style="left:521px;top:420px;width:169px;height:1px;background:#fff"></div>
<div class="a" style="left:544.1px;top:424.4px;width:35.5px;height:13.1px;border:1px solid #3C5A8A;border-radius:2px;background:linear-gradient(#FFFFFF,#F3F3EE 60%,#E2E0D6)"><div class="t" style="left:11.5px;top:1.4px">OK</div></div>
<div class="a" style="left:630.2px;top:424.4px;width:35.2px;height:13.1px;border:1px solid #3C5A8A;border-radius:2px;background:linear-gradient(#FFFFFF,#F3F3EE 60%,#E2E0D6)"><div class="t" style="left:5.5px;top:1.4px">Cancel</div></div>

<!-- PROMPT -->
<div class="a" style="left:136px;top:443px;width:592px;height:22px;background:linear-gradient(#F8F7F1,#EFEDE3 70%,#ECEADD)"></div><div class="a" style="left:182px;top:442px;width:546px;height:1px;background:#fff"></div>
<div class="a" style="left:136px;top:465px;width:592px;height:1px;background:#D6D2C2"></div>
<div class="a" style="left:142.2px;top:446.2px;width:12.5px;height:15.7px;border:1px solid #5A7CAA;border-radius:2px;background:linear-gradient(#FFFFFF,#EFEFEA)"><svg style="left:0.5px;top:3.5px" width="11" height="8"><path d="M0.5 4 L4.5 0.5 V2.8 H10.5 V5.2 H4.5 V7.5 Z" fill="#000"/></svg></div>
<div class="a" style="left:158px;top:446.2px;width:13px;height:15.7px;border:1px solid #5A7CAA;border-radius:2px;background:linear-gradient(#FFFFFF,#EFEFEA)"><svg style="left:2px;top:3.5px" width="9" height="9"><path d="M0.5 0.5 L8 8 M8 0.5 L0.5 8" stroke="#E81010" stroke-width="1.1"/></svg></div>
<div class="t" style="left:175px;top:449.2px">Fill out the Edit Boundary Condition dialog</div>

<!-- MESSAGE AREA -->
<div class="a" style="left:0;top:466px;width:728px;height:55px;background:linear-gradient(#F5F4EE,#EFEEE6)"></div><div class="a" style="left:136px;top:466px;width:592px;height:1px;background:#fff"></div>
<div class="a" style="left:28px;top:468.7px;width:697.3px;height:50px;background:#F4F3EE;border:1px solid #D8D5C8"></div>
<div class="a" style="left:31px;top:473px;width:691.4px;height:42.7px;background:#fff;border:1px solid #A5B9D8"></div>
<div class="t" style="left:35.3px;top:475.5px;font-family:'Liberation Mono',monospace;font-size:9.46px;line-height:11px;color:#3A3A3A">The model database "c:\lucru\lucru_abaqus\fin_laboratoare_master_Autoliv\overhead_hoist.cae" has been opened.</div>
<div class="a" style="left:1.5px;top:469px;width:27px;height:26.5px;background:#FBFBF8;border-top:1px solid #DDDAD0;border-radius:2px 0 0 2px"></div>
<div class="a" style="left:2px;top:470px;width:2px;height:25px;background:#F4B03A;border-radius:1px"></div>
<div class="a" style="left:8px;top:475px;width:13.3px;height:13.2px;border:1px solid #7A786C;background:linear-gradient(135deg,#FCFCFA,#E4E2D8 60%,#CFCCC0)"></div>
<svg style="left:7px;top:482px" width="9" height="8" viewBox="0 0 9 8"><path d="M0.5 6 L6 0.8 L8.3 2.8 L2.8 7.6 Z" fill="#E8C040" stroke="#4A3A0A" stroke-width=".8"/><path d="M2 5 L5.5 2 M3 6.3 L6.5 3.3" stroke="#8A6A10" stroke-width=".5"/></svg>
<div class="a" style="left:3.5px;top:496.7px;width:24.2px;height:20.7px;background:#F6F5F0;border:1px solid #B9C4D4;border-right:none"></div>
<div class="a" style="left:8.5px;top:499.7px;width:14.3px;height:13.6px;border:1px solid #5A4A10;background:linear-gradient(#FBF2B0,#EFD672 55%,#E6C656)"><svg style="left:1.5px;top:3px" width="11" height="7" viewBox="0 0 11 7"><path d="M0.5 0.5 L3 3.5 L0.5 6.5 M4 0.5 L6.5 3.5 L4 6.5 M7.5 0.5 L10 3.5 L7.5 6.5" stroke="#111" stroke-width="1.4" fill="none"/></svg></div>

<!-- TASKBAR -->
<div class="a" style="left:0;top:521.5px;width:728px;height:24.5px;background:linear-gradient(#4A88F4,#2F68DE 10%,#2660DC 40%,#245BD8 80%,#2050C8)"></div>

<div class="a" style="left:0;top:525px;width:68.5px;height:21px;border-radius:0 9px 9px 0;background:linear-gradient(#62B862,#48A848 15%,#3A9C3A 45%,#2F902F 75%,#2A822A);box-shadow:inset -2px 0 2px rgba(0,40,0,.35),inset 1px 0 0 rgba(0,40,0,.4)"></div>
<svg style="left:8px;top:529.0px" width="13" height="12" viewBox="0 0 13 12"><path d="M0.5 1.5 Q3 0 6 1 V5.5 Q3 4.5 0.5 6 Z" fill="#F0512A"/><path d="M6.8 1.2 Q9.5 2.2 12.5 0.8 V5.3 Q9.5 6.5 6.8 5.7 Z" fill="#7DC142"/><path d="M0.5 6.7 Q3 5.2 6 6.2 V10.7 Q3 9.7 0.5 11.2 Z" fill="#3A8CE8"/><path d="M6.8 6.4 Q9.5 7.4 12.5 6 V10.5 Q9.5 11.7 6.8 10.9 Z" fill="#F8C21A"/></svg>
<div class="t" style="left:25px;top:528px;font-style:italic;font-weight:bold;font-size:12.4px;color:#fff;line-height:15px;letter-spacing:-.1px;text-shadow:1px 1px 1px rgba(0,30,0,.6)">start</div>
<svg style="left:74.5px;top:526px" width="6" height="17" viewBox="0 0 6 17"><rect x="1" y="0.5" width="1.6" height="1.3" fill="#173C96"/><rect x="1.6" y="1.1" width="1" height=".8" fill="#6FA0F8"/><rect x="3" y="2.5" width="1.6" height="1.3" fill="#173C96"/><rect x="3.6" y="3.1" width="1" height=".8" fill="#6FA0F8"/><rect x="1" y="4.5" width="1.6" height="1.3" fill="#173C96"/><rect x="1.6" y="5.1" width="1" height=".8" fill="#6FA0F8"/><rect x="3" y="6.5" width="1.6" height="1.3" fill="#173C96"/><rect x="3.6" y="7.1" width="1" height=".8" fill="#6FA0F8"/><rect x="1" y="8.5" width="1.6" height="1.3" fill="#173C96"/><rect x="1.6" y="9.1" width="1" height=".8" fill="#6FA0F8"/><rect x="3" y="10.5" width="1.6" height="1.3" fill="#173C96"/><rect x="3.6" y="11.1" width="1" height=".8" fill="#6FA0F8"/><rect x="1" y="12.5" width="1.6" height="1.3" fill="#173C96"/><rect x="1.6" y="13.1" width="1" height=".8" fill="#6FA0F8"/><rect x="3" y="14.5" width="1.6" height="1.3" fill="#173C96"/><rect x="3.6" y="15.1" width="1" height=".8" fill="#6FA0F8"/></svg>
<!-- task buttons -->
<div class="a" style="left:83.3px;top:526.5px;width:86.7px;height:19.5px;border-radius:2px;background:linear-gradient(#5A98FA,#4286F6 20%,#3C80F2 80%,#346FE4);border:1px solid #2A5ED0"></div>
<svg style="left:88.5px;top:529.0px" width="12" height="12" viewBox="0 0 12 12"><path d="M0.5 3 H4 L5 4 H10 V11 H0.5 Z" fill="#E9C870" stroke="#7A5A18" stroke-width=".7"/><rect x="4" y="4" width="6.5" height="6" fill="#CDE" stroke="#446" stroke-width=".5"/></svg>
<div class="t" style="left:103.8px;top:531px;color:#fff;font-size:7.7px;letter-spacing:.18px">fin_laboratoar...</div>
<div class="a" style="left:172.5px;top:526.5px;width:86.3px;height:19.5px;border-radius:2px;background:linear-gradient(#5A98FA,#4286F6 20%,#3C80F2 80%,#346FE4);border:1px solid #2A5ED0"></div>
<svg style="left:178.8px;top:529.0px" width="11" height="13" viewBox="0 0 11 13"><rect x="0" y="0" width="11" height="13" fill="#E8E8E8"/><path d="M2 0 V13 M5.5 0 V13 M9 0 V13" stroke="#222" stroke-width="1.3"/><path d="M0.5 3 H3.5 M4 6 H7 M7.5 9 H10.5" stroke="#222" stroke-width="1.5"/></svg>
<div class="t" style="left:192.5px;top:531px;color:#fff;font-size:7.7px;letter-spacing:-.5px">ABAQUS CAE</div>
<div class="a" style="left:261.3px;top:526.5px;width:85px;height:19.5px;border-radius:2px;background:linear-gradient(#5A98FA,#4286F6 20%,#3C80F2 80%,#346FE4);border:1px solid #2A5ED0"></div>
<svg style="left:267px;top:528.5px" width="12" height="13" viewBox="0 0 12 13"><path d="M3 0.5 H9 L11.5 3 V12.5 H3 Z" fill="#F4F4F4" stroke="#666" stroke-width=".6"/><circle cx="4.5" cy="7" r="3.8" fill="none" stroke="#2A5FD0" stroke-width="1.5"/><path d="M1 7 H8" stroke="#2A5FD0" stroke-width="1"/></svg>
<div class="t" style="left:281.3px;top:531px;color:#fff;font-size:7.7px;letter-spacing:.12px">Getting Starte...</div>
<div class="a" style="left:349.6px;top:526.5px;width:88px;height:19.5px;border-radius:2px;background:linear-gradient(#1B44B0,#1E4FC6 15%,#2254CC 85%,#2E62D8);border:1px solid #173C9C"></div>
<svg style="left:357px;top:530.0px" width="11" height="11" viewBox="0 0 11 11"><rect x="0.5" y="0.5" width="10" height="10" fill="#fff" stroke="#1B2A4A"/><path d="M1 1 L10 10 L10 6 L5 1 Z" fill="#1F6FB8"/><path d="M1 1 L1 5 L6 10 L10 10 Z" fill="#2C86C9"/><path d="M2.5 8.5 L8.5 2.5" stroke="#fff" stroke-width=".8"/></svg>
<div class="t" style="left:370.8px;top:531px;color:#fff;font-size:7.7px;letter-spacing:-.15px">ABAQUS/CAE ...</div>
<div class="a" style="left:438.9px;top:526.5px;width:88px;height:19.5px;border-radius:2px;background:linear-gradient(#5A98FA,#4286F6 20%,#3C80F2 80%,#346FE4);border:1px solid #2A5ED0"></div>
<svg style="left:445.5px;top:529.5px" width="11" height="12" viewBox="0 0 11 12"><rect x="0.5" y="0.5" width="10" height="11" fill="#F4F4F4" stroke="#667" stroke-width=".6"/><text x="1.5" y="9.5" font-family="Liberation Serif" font-size="9" font-weight="bold" fill="#2A4AA0">W</text></svg>
<div class="t" style="left:458.7px;top:531px;color:#F7D46A;font-size:7.7px;font-weight:bold">2</div>
<div class="t" style="left:465px;top:531px;color:#fff;font-size:7.7px;letter-spacing:.2px">Microsoft ...</div>
<svg style="left:520.5px;top:532.5px" width="5" height="3"><path d="M0 0 H5 L2.5 3 Z" fill="#fff"/></svg>
<svg style="left:531px;top:526px" width="6" height="17" viewBox="0 0 6 17"><rect x="1" y="0.5" width="1.6" height="1.3" fill="#173C96"/><rect x="1.6" y="1.1" width="1" height=".8" fill="#6FA0F8"/><rect x="3" y="2.5" width="1.6" height="1.3" fill="#173C96"/><rect x="3.6" y="3.1" width="1" height=".8" fill="#6FA0F8"/><rect x="1" y="4.5" width="1.6" height="1.3" fill="#173C96"/><rect x="1.6" y="5.1" width="1" height=".8" fill="#6FA0F8"/><rect x="3" y="6.5" width="1.6" height="1.3" fill="#173C96"/><rect x="3.6" y="7.1" width="1" height=".8" fill="#6FA0F8"/><rect x="1" y="8.5" width="1.6" height="1.3" fill="#173C96"/><rect x="1.6" y="9.1" width="1" height=".8" fill="#6FA0F8"/><rect x="3" y="10.5" width="1.6" height="1.3" fill="#173C96"/><rect x="3.6" y="11.1" width="1" height=".8" fill="#6FA0F8"/><rect x="1" y="12.5" width="1.6" height="1.3" fill="#173C96"/><rect x="1.6" y="13.1" width="1" height=".8" fill="#6FA0F8"/><rect x="3" y="14.5" width="1.6" height="1.3" fill="#173C96"/><rect x="3.6" y="15.1" width="1" height=".8" fill="#6FA0F8"/></svg>
<!-- tray -->
<div class="a" style="left:558.5px;top:521.5px;width:170px;height:24.5px;background:linear-gradient(#1AA4F6,#0F96EE 15%,#0C8DE9 60%,#0B86E0 90%,#0A78D0);border-left:1px solid #0A5EC0"></div>
<div class="t" style="left:540.5px;top:531px;color:#fff;font-size:7.7px">EN</div>
<svg style="left:554px;top:527.0px" width="13" height="13" viewBox="0 0 13 13"><circle cx="6.5" cy="6.5" r="6" fill="#3C88F0" stroke="#BFDAFF" stroke-width="1"/><path d="M7.5 3.5 L4.5 6.5 L7.5 9.5" stroke="#fff" stroke-width="1.4" fill="none"/></svg>
<svg style="left:568px;top:527.5px" width="9" height="11" viewBox="0 0 9 11"><path d="M4.5 0.5 L8.5 2 V5.5 Q8.5 9 4.5 10.5 Q0.5 9 0.5 5.5 V2 Z" fill="#F0D020" stroke="#6A5A10" stroke-width=".6"/><path d="M4.5 2.5 V6.5 M4.5 7.5 V8.5" stroke="#222" stroke-width="1.1"/></svg>
<svg style="left:580.5px;top:527.5px" width="10" height="11" viewBox="0 0 10 11"><path d="M5 0.5 L9.5 2 V5.5 Q9.5 9 5 10.5 Q0.5 9 0.5 5.5 V2 Z" fill="#D02020" stroke="#6A1010" stroke-width=".6"/><path d="M3 4 L7 8 M7 4 L3 8" stroke="#fff" stroke-width="1.2"/></svg>
<svg style="left:593px;top:527.5px" width="10" height="11" viewBox="0 0 10 11"><circle cx="5" cy="5.5" r="4.8" fill="#9ACB4A"/><rect x="2.5" y="3" width="5" height="5" fill="none" stroke="#E8F4C0" stroke-width="1"/></svg>
<svg style="left:606px;top:527.0px" width="11" height="12" viewBox="0 0 11 12"><circle cx="5.5" cy="6" r="5.2" fill="#C8CCD4"/><path d="M2.5 3 L8.5 9 M8.5 3 L2.5 9" stroke="#F4F4F4" stroke-width="1.8"/></svg>
<svg style="left:619px;top:527.0px" width="10" height="13" viewBox="0 0 10 13"><circle cx="5" cy="5.5" r="4.8" fill="#F0A030"/><circle cx="6.5" cy="9" r="3" fill="#E02020" stroke="#fff" stroke-width=".5"/><path d="M5.3 7.8 L7.7 10.2 M7.7 7.8 L5.3 10.2" stroke="#fff" stroke-width=".8"/></svg>
<svg style="left:631px;top:526.5px" width="13" height="14" viewBox="0 0 13 14"><rect x="0.5" y="3" width="7" height="6" fill="#6C84B8" stroke="#1A2A50" stroke-width=".6"/><path d="M9 2 Q11 4 9 6 M10 0.5 Q13 4 10 7.5" stroke="#fff" stroke-width=".8" fill="none"/><path d="M6 9.5 L10 13.5 M10 9.5 L6 13.5" stroke="#E01010" stroke-width="1.3"/></svg>
<svg style="left:644px;top:526.5px" width="13" height="14" viewBox="0 0 13 14"><rect x="0.5" y="4" width="6" height="5" fill="#6C84B8" stroke="#1A2A50" stroke-width=".6"/><rect x="3.5" y="1" width="6" height="5" fill="#8AA0D0" stroke="#1A2A50" stroke-width=".6"/><path d="M6.5 9 L10.5 13 M10.5 9 L6.5 13" stroke="#E01010" stroke-width="1.3"/></svg>
<svg style="left:658px;top:526.5px" width="11" height="13" viewBox="0 0 11 13"><circle cx="7" cy="4.5" r="3.8" fill="#3CB43C"/><path d="M5 4.5 L6.5 6 L9 3" stroke="#fff" stroke-width="1" fill="none"/><path d="M0.5 12 L3 8 L5.5 12 M1.5 10 H4.5" stroke="#E8E8F0" stroke-width="1.1" fill="none"/></svg>
<svg style="left:670.5px;top:526.5px" width="12" height="14" viewBox="0 0 12 14"><path d="M1 1 L9 9 L11 13 L7 11 Z" fill="#2A2A3A" stroke="#8A8AA0" stroke-width=".5"/><path d="M3 3 L9 9" stroke="#AAB" stroke-width=".6"/></svg>
<svg style="left:683px;top:527.0px" width="11" height="12" viewBox="0 0 11 12"><circle cx="5.5" cy="6" r="5" fill="#DADDE2" stroke="#A0A4AC" stroke-width=".6"/><path d="M3 5 H8 M3 7.5 H8" stroke="#8A8E96" stroke-width=".8"/></svg>
<div class="t" style="left:699px;top:529.3px;color:#fff;font-size:7.9px">17:57</div>
</body></html>
